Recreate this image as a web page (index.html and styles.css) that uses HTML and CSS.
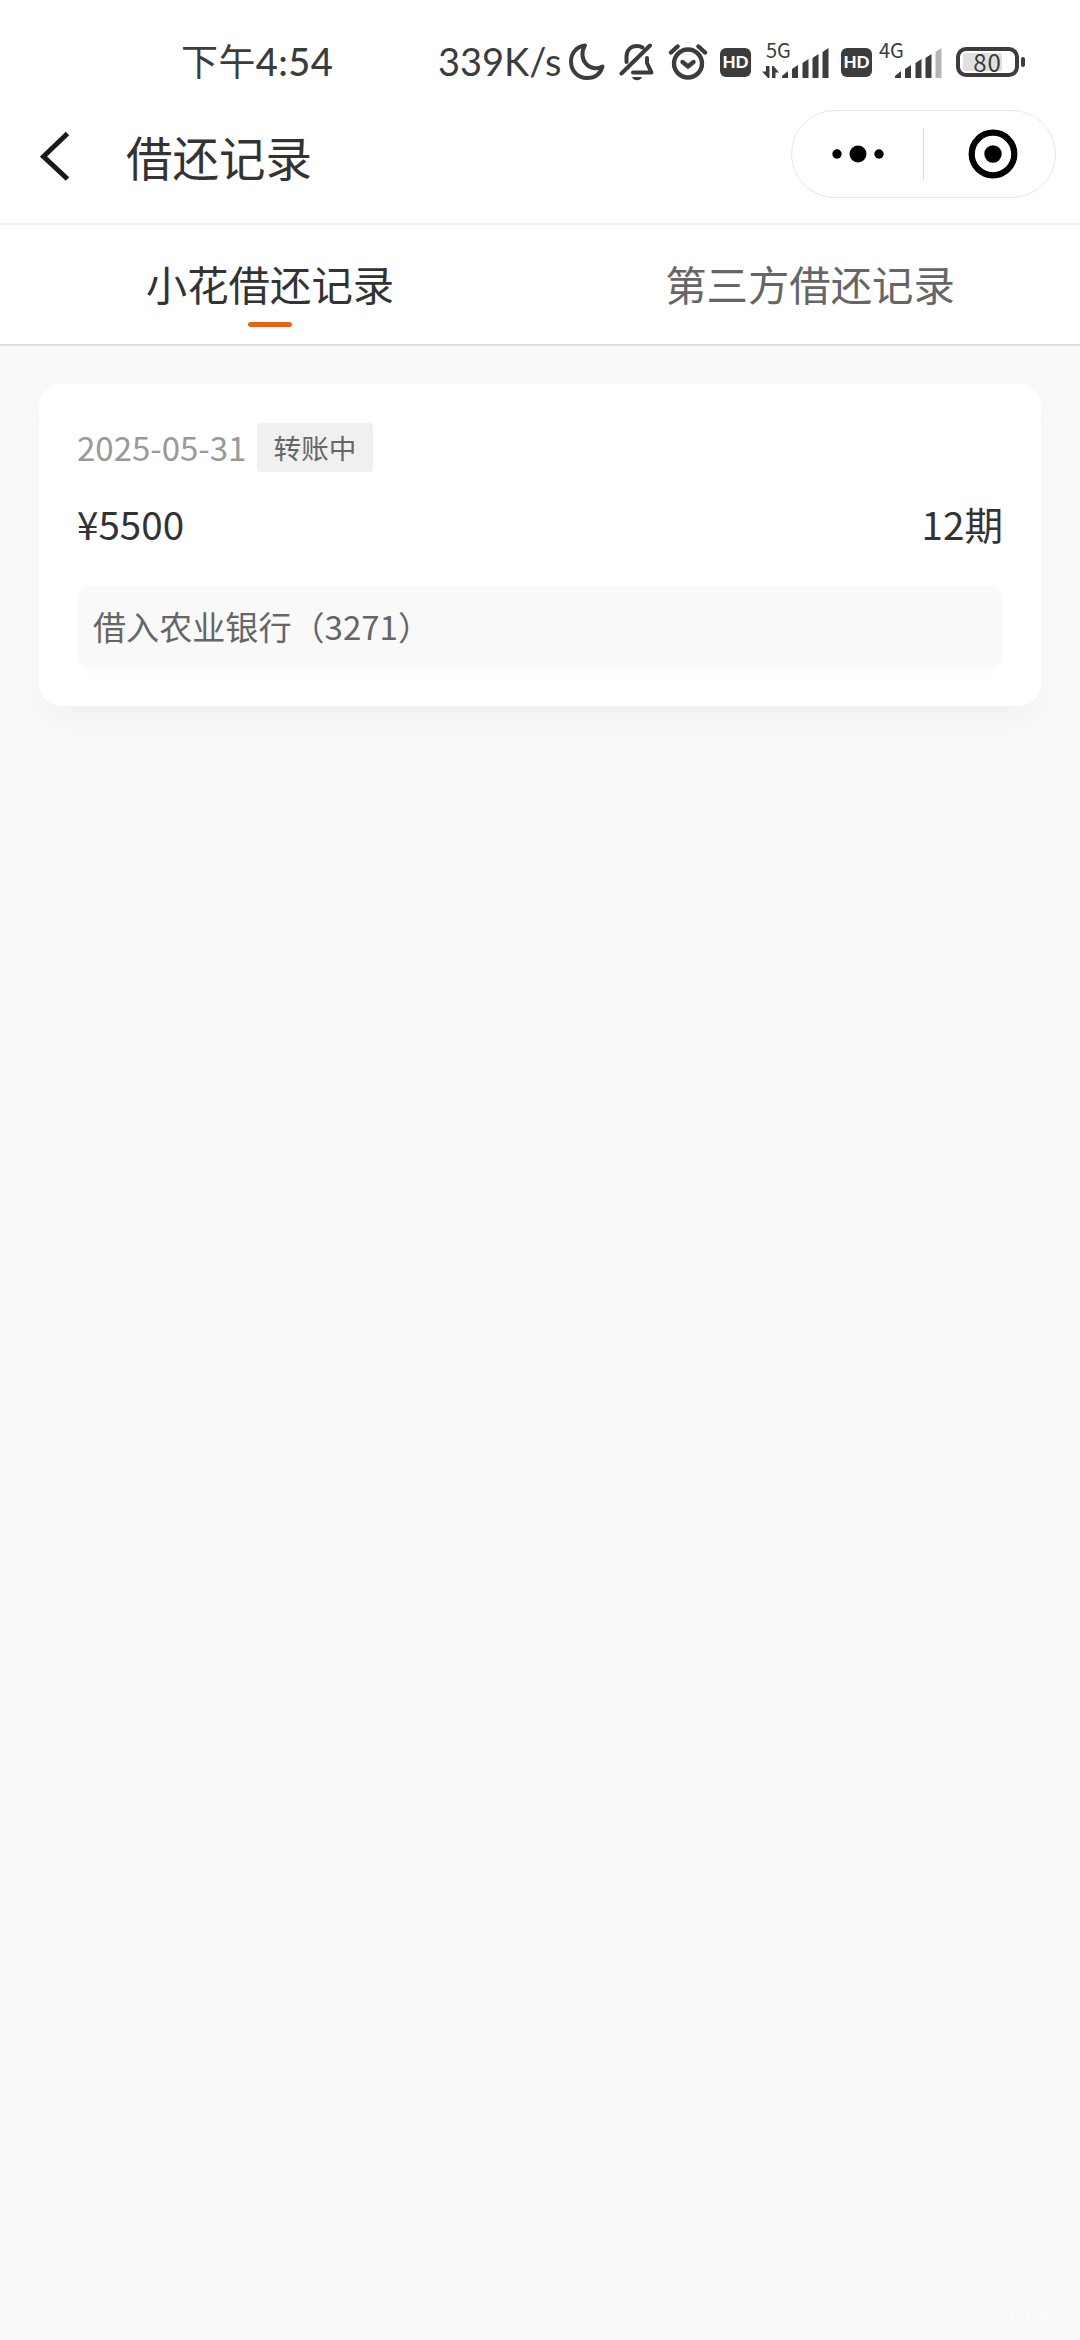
FILE: index.html
```html
<!DOCTYPE html>
<html lang="zh-CN">
<head>
    <meta charset="UTF-8">
    <meta name="viewport" content="width=device-width, initial-scale=1.0">
    <title>借还记录</title>
    <link rel="stylesheet" href="styles.css">
</head>
<body>
    <!-- System status bar -->
    <div class="status-bar">
        <div class="time"><span class="period">下午</span>4:54</div>
        <div class="status-right">
            <span class="speed">339K/s</span>
            <svg class="icon-moon" width="36" height="38" viewBox="0 0 36 38" fill="none" stroke="#3c3c3c" stroke-width="4" stroke-linejoin="round">
                <path d="M16 2.5C7 3.500 2 11 2 18.500C2 28 9 35 18 35C26 35 31.500 30.500 33.500 23.500C31 25 28.500 25.500 26 25.300C19 24.500 14 19 13.500 12.500C13.300 9 14 5.500 16 2.500Z"/>
            </svg>
            <svg class="icon-bell" width="36" height="38" viewBox="0 0 36 38" fill="none" stroke="#3c3c3c" stroke-width="4" stroke-linecap="round" stroke-linejoin="round">
                <path d="M7.500 19V14C7.500 7 12 3 18 3C20 3 22 3.500 23.500 4.500"/>
                <path d="M28 15V20L32.500 29.500H14"/>
                <path d="M2.500 30.500L31 2.500"/>
                <path d="M13 34H23C22 36.500 20.500 37.200 18 37.200S14 36.500 13 34Z" fill="#3c3c3c" stroke="none"/>
            </svg>
            <svg class="icon-alarm" width="40" height="38" viewBox="0 0 40 38" fill="none" stroke="#3c3c3c" stroke-width="4.4" stroke-linecap="round" stroke-linejoin="round">
                <circle cx="20" cy="20.500" r="14"/>
                <path d="M14.500 19L20 23.500L25.500 19"/>
                <path d="M3 9.500L9.500 3.500M30.500 3.500L37 9.500"/>
            </svg>
            <span class="hd">HD</span>
            <div class="signal signal-5g">
                <span class="net">5G</span>
                <svg width="68" height="32" viewBox="0 0 68 32" fill="#3c3c3c">
                    <path d="M0 24.500H4V19H7.500V31H6ZM10 19H11.500L17 25.500H13.500V31H10Z"/>
                    <path d="M20 31V29L26 24V31Z"/>
                    <path d="M30 31V22L36 18V31Z"/>
                    <path d="M40.500 31V16L46.500 12V31Z"/>
                    <path d="M50.500 31V11L56.500 7V31Z"/>
                    <path d="M60.500 31V5L66.500 1V31Z"/>
                </svg>
            </div>
            <span class="hd hd-second">HD</span>
            <div class="signal signal-4g">
                <span class="net">4G</span>
                <svg width="68" height="32" viewBox="0 0 68 32" fill="#3c3c3c">
                    <path d="M20 31V29L26 24V31Z"/>
                    <path d="M30 31V22L36 18V31Z"/>
                    <path d="M40.500 31V16L46.500 12V31Z"/>
                    <path d="M50.500 31V11L56.500 7V31Z"/>
                    <path d="M60.500 31V5L66.500 1V31Z" fill="#b5b5b5"/>
                </svg>
            </div>
            <div class="battery"><span>80</span></div>
            <div class="battery-tip"></div>
        </div>
    </div>

    <!-- Title bar -->
    <header>
        <svg class="back" width="30" height="50" viewBox="0 0 30 50" fill="none" stroke="#1a1a1a" stroke-width="5">
            <path d="M27.500 2.500L3.500 25.500L27.500 48"/>
        </svg>
        <h1>借还记录</h1>
        <div class="capsule">
            <svg width="52" height="18" viewBox="0 0 52 18">
                <circle cx="5" cy="9" r="4.700"/>
                <circle cx="26" cy="9" r="8.500"/>
                <circle cx="47" cy="9" r="4.700"/>
            </svg>
            <div class="divider"></div>
            <svg width="50" height="50" viewBox="0 0 50 50">
                <circle cx="25" cy="25" r="21.300" fill="none" stroke="#000" stroke-width="6.200"/>
                <circle cx="25" cy="25" r="8.700"/>
            </svg>
        </div>
    </header>

    <nav class="tabs">
        <div class="tab active">小花借还记录</div>
        <div class="tab">第三方借还记录</div>
    </nav>

    <main>
        <div class="card">
            <div class="card-top">
                <span class="date">2025-05-31</span>
                <span class="tag">转账中</span>
            </div>
            <div class="card-amount">
                <span class="amount">¥5500</span>
                <span class="periods">12期</span>
            </div>
            <div class="bank">借入农业银行（3271）</div>
        </div>
    </main>

    <footer>卡农社区</footer>
</body>
</html>
```
FILE: styles.css
```css
* {
    margin: 0;
    padding: 0;
    box-sizing: border-box;
}

body {
    display: flex;
    flex-direction: column;
    height: 2340px;
    font-family: 'Noto Sans CJK SC', sans-serif;
    background: #f9f9f9;
    color: #333;
}

svg {
    display: block;
    flex: none;
}

/* Status bar */
.status-bar {
    display: flex;
    height: 100px;
    padding: 42px 54px 0 181px;
    background: #fff;
    color: #3c3c3c;
    font-family: Lato, 'Noto Sans CJK SC', sans-serif;
    font-size: 38px;
    line-height: 38px;
    white-space: nowrap;
}

.time {
    width: 257px;
    font-weight: 500;
    letter-spacing: 0.4px;
}

.period {
    font-size: 37px;
    font-weight: 400;
}

.status-right {
    display: flex;
    align-items: flex-start;
}

.speed {
    width: 131px;
}

.icon-moon {
    margin-top: 1px;
}

.icon-bell {
    margin: 1px 0 0 14px;
}

.icon-alarm {
    margin: 1px 0 0 13px;
}

.hd {
    width: 31px;
    height: 29px;
    margin: 6px 0 0 12px;
    border-radius: 6px;
    background: #3c3c3c;
    color: #fff;
    font-size: 17px;
    font-weight: 900;
    line-height: 28px;
    text-align: center;
}

.signal {
    position: relative;
    width: 68px;
    margin: 5px 0 0 11px;
}

.net {
    position: absolute;
    top: -8px;
    left: 4px;
    font-family: 'Noto Sans CJK SC', sans-serif;
    font-size: 20px;
    line-height: 22px;
}

.hd-second {
    margin-left: 11px;
}

.signal-4g {
    margin-left: 3px;
}

.battery {
    width: 63px;
    height: 30px;
    margin: 5px 0 0 13px;
    border: 4px solid #3c3c3c;
    border-radius: 10px;
    padding: 2px 3px;
}

.battery span {
    display: block;
    height: 18px;
    border-radius: 3px;
    background: linear-gradient(to right, #e0e0e0 80%, #fff 80%);
    font-family: 'Noto Sans CJK SC', sans-serif;
    font-size: 24px;
    letter-spacing: 1px;
    line-height: 17px;
    text-align: center;
}

.battery-tip {
    width: 4px;
    height: 10px;
    margin: 15px 0 0 2px;
    border-radius: 2px;
    background: #3c3c3c;
}

/* Title bar */
header {
    display: flex;
    align-items: flex-start;
    height: 125px;
    padding: 10px 24px 0 40px;
    background: #fff;
    border-bottom: 2px solid #f0f0f0;
}

.back {
    margin-top: 21px;
}

h1 {
    flex: 1;
    margin: 12px 0 0 56px;
    font-size: 46.5px;
    font-weight: 400;
    line-height: 68px;
}

.capsule {
    display: flex;
    align-items: center;
    width: 265px;
    height: 88px;
    padding-left: 40px;
    border: 1px solid #e6e6e6;
    border-radius: 44px;
}

.divider {
    width: 1px;
    height: 52px;
    margin: 0 44px 0 39px;
    background: #dcdcdc;
}

/* Tabs */
.tabs {
    display: flex;
    height: 121px;
    background: #fff;
    border-bottom: 2px solid #dedede;
}

.tab {
    flex: 1;
    display: flex;
    flex-direction: column;
    align-items: center;
    padding-top: 28px;
    color: #666;
    font-size: 41.4px;
    line-height: 60px;
}

.tab.active {
    color: #333;
}

.tab.active::after {
    content: '';
    width: 44px;
    height: 5px;
    margin-top: 9px;
    border-radius: 3px;
    background: #eb6318;
}

/* Record list */
main {
    flex: 1;
    padding: 38px 39px;
}

.card {
    height: 322px;
    padding: 39px 38px 0;
    border-radius: 22px;
    background: #fff;
    box-shadow: 0 20px 24px -6px rgba(0, 0, 0, 0.03);
}

.card-top {
    display: flex;
    align-items: center;
    height: 49px;
}

.date {
    width: 180px;
    color: #999;
    font-size: 33px;
    line-height: 46px;
    padding-bottom: 2px;
}

.tag {
    width: 116px;
    height: 49px;
    border-radius: 4px;
    background: #f0f0f0;
    color: #666;
    font-size: 27.6px;
    line-height: 49px;
    text-align: center;
}

.card-amount {
    display: flex;
    justify-content: space-between;
    margin-top: 23px;
    line-height: 56px;
}

.amount,
.periods {
    font-size: 38.6px;
}

.bank {
    height: 82px;
    margin-top: 35px;
    padding-left: 16px;
    border-radius: 14px;
    background: #f9f9f9;
    box-shadow: 0 4px 14px rgba(0, 0, 0, 0.015);
    color: #666;
    font-size: 33.1px;
    line-height: 80px;
}

/* Faint mark in the bottom corner */
footer {
    padding: 0 24px 18px;
    color: #fdfdfd;
    font-size: 16px;
    line-height: 20px;
    text-align: right;
}
```
